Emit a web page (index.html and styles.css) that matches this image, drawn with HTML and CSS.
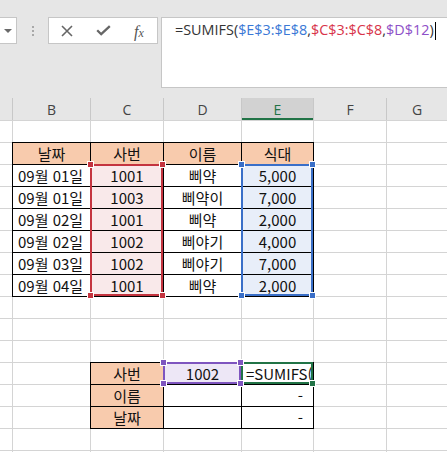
FILE: index.html
```html
<!DOCTYPE html>
<html lang="ko">
<head>
<meta charset="utf-8">
<link rel="stylesheet" href="styles.css">
</head>
<body>
<div class="app">
  <div class="topbar">
    <div class="namebox"><span class="tri"></span></div>
    <div class="grip"><i></i><i></i><i></i></div>
    <div class="fbtns">
      <span class="fbtn"><svg width="12" height="12" viewBox="0 0 12 12"><path d="M1 1L11 11M11 1L1 11" stroke="#666" stroke-width="1.6" fill="none"/></svg></span>
      <span class="fbtn"><svg width="15" height="11" viewBox="0 0 15 11"><path d="M1.2 5.2L5.2 9.2L13.8 1.2" stroke="#666" stroke-width="2.3" fill="none"/></svg></span>
      <span class="fbtn fx">f<span class="fx-x">x</span></span>
    </div>
    <div class="formula"><span>=SUMIFS(</span><span class="f-blue">$E$3:$E$8</span>,<span class="f-red">$C$3:$C$8</span>,<span class="f-purple">$D$12</span>)<span class="cursor"></span></div>
  </div>
  <div class="sheet">
    <div class="ch first"></div>
    <div class="ch">B</div>
    <div class="ch">C</div>
    <div class="ch">D</div>
    <div class="ch on">E</div>
    <div class="ch">F</div>
    <div class="ch">G</div>

    <div class="tbl t1">
      <div class="c h">날짜</div><div class="c h">사번</div><div class="c h">이름</div><div class="c h">식대</div>
      <div class="c l">09월 01일</div><div class="c pk">1001</div><div class="c">삐약</div><div class="c bu">5,000</div>
      <div class="c l">09월 01일</div><div class="c pk">1003</div><div class="c">삐약이</div><div class="c bu">7,000</div>
      <div class="c l">09월 02일</div><div class="c pk">1001</div><div class="c">삐약</div><div class="c bu">2,000</div>
      <div class="c l">09월 02일</div><div class="c pk">1002</div><div class="c">삐야기</div><div class="c bu">4,000</div>
      <div class="c l">09월 03일</div><div class="c pk">1002</div><div class="c">삐야기</div><div class="c bu">7,000</div>
      <div class="c l">09월 04일</div><div class="c pk">1001</div><div class="c">삐약</div><div class="c bu">2,000</div>
    </div>

    <div class="tbl t2">
      <div class="c h">사번</div><div class="c pu">1002</div><div class="c fl">=SUMIFS(</div>
      <div class="c h">이름</div><div class="c"></div><div class="c rt">-</div>
      <div class="c h">날짜</div><div class="c"></div><div class="c rt">-</div>
    </div>

    <div class="sel sel-red"><i class="hd htl"></i><i class="hd htr"></i><i class="hd hbl"></i><i class="hd hbr"></i></div>
    <div class="sel sel-blue"><i class="hd htl"></i><i class="hd htr"></i><i class="hd hbl"></i><i class="hd hbr"></i></div>
    <div class="sel act"><i class="hd hbr"></i></div>
    <div class="sel sel-purple"><i class="hd htl"></i><i class="hd htr"></i><i class="hd hbl"></i><i class="hd hbr"></i></div>
  </div>
</div>
</body>
</html>
```
FILE: styles.css
```css
* { box-sizing: border-box; }
html, body { margin: 0; padding: 0; }
body {
  background: #fff;
  font-family: "Noto Sans CJK KR", "Noto Sans", sans-serif;
  overflow: hidden;
}
.app { width: 447px; height: 452px; overflow: hidden; }

.topbar {
  height: 98px;
  background: #e6e6e6;
  display: flex;
  align-items: flex-start;
  padding-top: 17px;
}
.namebox {
  width: 17px;
  height: 27px;
  flex: none;
  background: #fff;
  border: 1px solid #c6c6c6;
  border-left: none;
  display: flex;
  align-items: center;
  justify-content: center;
}
.tri {
  width: 0; height: 0;
  border-left: 4px solid transparent;
  border-right: 4px solid transparent;
  border-top: 4px solid #6a6a6a;
}
.grip {
  width: 31px;
  height: 27px;
  flex: none;
  display: flex;
  flex-direction: column;
  align-items: center;
  justify-content: center;
  gap: 2px;
}
.grip i { display: block; width: 2px; height: 2px; background: #a8a8a8; }
.fbtns {
  width: 110px;
  height: 27px;
  flex: none;
  background: #fff;
  border: 1px solid #c6c6c6;
  display: flex;
}
.fbtn {
  width: 36px;
  display: flex;
  align-items: center;
  justify-content: center;
}
.fx {
  font-family: "Liberation Serif", serif;
  font-style: italic;
  font-size: 16px;
  color: #555;
  line-height: 1;
  align-items: baseline;
  padding-top: 6px;
}
.fx-x { font-size: 12px; }
.formula {
  flex: 1;
  margin-left: 3px;
  margin-right: -2px;
  height: 71px;
  background: #fff;
  border: 1px solid #c6c6c6;
  padding: 1px 0 0 13px;
  font-family: "Open Sans", sans-serif;
  font-size: 14.4px;
  line-height: 22px;
  color: #333;
  white-space: nowrap;
}
.f-blue { color: #3a78d6; }
.f-red { color: #d8344a; }
.f-purple { color: #8e50c8; }
.cursor {
  display: inline-block;
  width: 1px;
  height: 18px;
  background: #000;
  vertical-align: middle;
  margin-left: 1px;
}

.sheet {
  display: grid;
  grid-template-columns: 12px 78px 73px 78px 72px 73px 61px;
  grid-auto-rows: 22px;
  height: 354px;
  background:
    linear-gradient(#d4d4d4, #d4d4d4) 12px 0 / 1px 100% no-repeat,
    linear-gradient(#d4d4d4, #d4d4d4) 90px 0 / 1px 100% no-repeat,
    linear-gradient(#d4d4d4, #d4d4d4) 163px 0 / 1px 100% no-repeat,
    linear-gradient(#d4d4d4, #d4d4d4) 241px 0 / 1px 100% no-repeat,
    linear-gradient(#d4d4d4, #d4d4d4) 313px 0 / 1px 100% no-repeat,
    linear-gradient(#d4d4d4, #d4d4d4) 386px 0 / 1px 100% no-repeat,
    repeating-linear-gradient(to bottom, #d4d4d4 0 1px, transparent 1px 22px),
    #fff;
}
.ch {
  background: #e6e6e6;
  border-left: 1px solid #c8c8c8;
  font-family: "Open Sans", sans-serif;
  font-size: 14px;
  color: #444;
  display: flex;
  align-items: center;
  justify-content: center;
}
.ch.first { border-left: none; }
.ch.on {
  background: #d2d2d2;
  color: #217346;
  box-shadow: inset 0 -2px 0 #217346;
}

.tbl {
  display: grid;
  grid-auto-rows: 22px;
  box-shadow: 1px 0 0 #000, 0 1px 0 #000, 1px 1px 0 #000;
}
.t1 { grid-column: 2 / 6; grid-row: 3 / 10; grid-template-columns: 78px 73px 78px 72px; }
.t2 { grid-column: 3 / 6; grid-row: 13 / 16; grid-template-columns: 73px 78px 72px; }
.c {
  border-top: 1px solid #000;
  border-left: 1px solid #000;
  background: #fff;
  font-size: 15px;
  line-height: 21px;
  color: #111;
  text-align: center;
  white-space: nowrap;
  overflow: hidden;
}
.h { background: #f8cbad; }
.l { text-align: left; padding-left: 5px; }
.fl { text-align: left; padding-left: 4px; }
.rt { text-align: right; padding-right: 10px; }
.pk { background: #f9e9ea; }
.bu { background: #e8eef9; }
.pu { background: #ede7f6; }

.sel { position: relative; border: 2px solid; }
.sel-red { grid-column: 3 / 4; grid-row: 4 / 10; border-color: #c4343f; }
.sel-blue { grid-column: 5 / 6; grid-row: 4 / 10; border-color: #3a6fc8; }
.sel-purple { grid-column: 4 / 5; grid-row: 13 / 14; border-color: #7e55bf; }
.act { grid-column: 5 / 6; grid-row: 13 / 14; border-color: #217346; }
.hd {
  position: absolute;
  width: 7px;
  height: 7px;
  border: 1px solid #fff;
}
.sel-red .hd { background: #c4343f; }
.sel-blue .hd { background: #3a6fc8; }
.sel-purple .hd { background: #7e55bf; }
.act .hd { background: #217346; }
.htl { left: -5px; top: -5px; }
.htr { right: -5px; top: -5px; }
.hbl { left: -5px; bottom: -5px; }
.hbr { right: -5px; bottom: -5px; }
```
